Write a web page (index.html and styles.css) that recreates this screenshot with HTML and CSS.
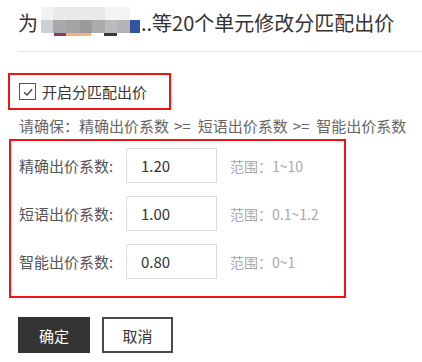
FILE: index.html
```html
<!DOCTYPE html>
<html lang="zh-CN">
<head>
<meta charset="utf-8">
<link rel="stylesheet" href="styles.css">
</head>
<body>
<div class="dialog">
  <div class="header">
    <span class="title-pre">为</span>
    <span class="blur">
      <span class="blur-top">
        <i class="c1"></i><i class="c2"></i><i class="c3"></i>
      </span>
      <span class="blur-mid">
        <i class="m1"></i><i class="m2"></i><i class="m3"></i><i class="m4"></i><i class="m5"></i><i class="m6"></i><i class="m7"></i><i class="m8"></i>
      </span>
      <span class="blur-bot">
        <i class="b0"></i><i class="b1"></i><i class="b2"></i><i class="b3"></i><i class="b4"></i>
      </span>
    </span>
    <span class="title-post">..等20个单元修改分匹配出价</span>
  </div>
  <div class="content">
    <div class="mark check-box">
      <span class="checkbox">
        <svg width="14" height="14" viewBox="0 0 14 14"><path d="M3 7.2 L6 10 L11.2 4.2" fill="none" stroke="#444" stroke-width="1.4"/></svg>
      </span>
      <span class="check-label">开启分匹配出价</span>
    </div>
    <div class="hint">请确保：精确出价系数<span class="op">&gt;=</span>短语出价系数<span class="op">&gt;=</span>智能出价系数</div>
    <div class="mark form-box">
      <div class="row">
        <span class="label">精确出价系数:</span>
        <span class="input">1.20</span>
        <span class="range">范围：1~10</span>
      </div>
      <div class="row">
        <span class="label">短语出价系数:</span>
        <span class="input">1.00</span>
        <span class="range">范围：0.1~1.2</span>
      </div>
      <div class="row">
        <span class="label">智能出价系数:</span>
        <span class="input">0.80</span>
        <span class="range">范围：0~1</span>
      </div>
    </div>
    <div class="actions">
      <button class="btn btn-primary">确定</button>
      <button class="btn btn-default">取消</button>
    </div>
  </div>
</div>
</body>
</html>
```

FILE: styles.css
```css
html, body {
  margin: 0;
  padding: 0;
  background: #fff;
}
body {
  font-family: "Noto Sans CJK SC", "Noto Sans", sans-serif;
  color: #333;
  width: 422px;
  height: 362px;
  overflow: hidden;
}
.header {
  margin-left: 18px;
  padding-top: 9px;
  padding-bottom: 14px;
  border-bottom: 1px solid #e6e6e6;
  display: flex;
  align-items: center;
  height: 28px;
  font-size: 20px;
  line-height: 28px;
  color: #333;
}
.title-pre { width: 23px; }
.blur {
  position: relative;
  width: 100px;
  height: 29px;
  display: flex;
  flex-direction: column;
  margin-top: -3px;
}
.blur i { display: block; height: 100%; }
.blur-top { display: flex; height: 13px; width: 89px; }
.blur-top .c1 { width: 12px; background: #f2f2f2; }
.blur-top .c2 { width: 52px; background: #e9e9ea; }
.blur-top .c3 { width: 25px; background: #f4f4f4; }
.blur-mid { display: flex; height: 13px; }
.blur-mid .m1 { width: 12px; background: #cfcfcf; }
.blur-mid .m2 { width: 13px; background: #a8a8b0; }
.blur-mid .m3 { width: 14px; background: #a3a3a3; }
.blur-mid .m4 { width: 12px; background: #9b9b9b; }
.blur-mid .m5 { width: 13px; background: #ababab; }
.blur-mid .m6 { width: 12px; background: #bbbbbb; }
.blur-mid .m7 { width: 13px; background: #b3b3b8; }
.blur-mid .m8 { width: 10px; background: #2f55a0; }
.blur-bot { display: flex; height: 3px; }
.blur-bot .b0 { width: 13px; }
.blur-bot .b1 { width: 12px; background: #8a3a60; }
.blur-bot .b2 { width: 25px; background: #f7b27a; }
.blur-bot .b3 { width: 13px; }
.blur-bot .b4 { width: 13px; background: #3a3a3a; }

.content {
  padding-left: 19px;
}
.mark {
  border: 2px solid #f01414;
}
.check-box {
  margin-top: 21px;
  margin-left: -11px;
  width: 150px;
  height: 33px;
  padding-left: 9px;
  display: flex;
  align-items: center;
}
.checkbox {
  box-sizing: border-box;
  width: 17px;
  height: 17px;
  border: 1px solid #555;
  display: flex;
  align-items: center;
  justify-content: center;
  margin-right: 6px;
}
.checkbox svg { display: block; }
.check-label {
  font-size: 15px;
  color: #333;
}
.hint {
  margin-top: 6px;
  font-size: 15px;
  line-height: 20px;
  color: #666;
  white-space: nowrap;
}
.hint .op {
  margin: 0 7px 0 5px;
}
.form-box {
  margin-top: 3px;
  margin-left: -10px;
  width: 325px;
  padding: 7px 0 17px 8px;
  display: flex;
  flex-direction: column;
  gap: 13px;
}
.row {
  display: flex;
  align-items: center;
  height: 35px;
}
.label {
  width: 107px;
  font-size: 15px;
  color: #555;
}
.input {
  box-sizing: border-box;
  width: 91px;
  height: 35px;
  border: 1px solid #dcdcdc;
  padding-left: 14px;
  font-size: 15px;
  line-height: 33px;
  color: #333;
}
.range {
  margin-left: 13px;
  font-size: 14px;
  color: #a8a8a8;
}
.actions {
  margin-top: 19px;
  margin-left: -1px;
  display: flex;
  gap: 12px;
}
.btn {
  box-sizing: border-box;
  height: 36px;
  font-family: inherit;
  font-size: 15px;
  padding: 0;
  margin: 0;
  cursor: pointer;
}
.btn-primary {
  width: 72px;
  background: #333;
  color: #fff;
  border: 1px solid #333;
}
.btn-default {
  width: 71px;
  background: #fff;
  color: #333;
  border: 2px solid #4a4a4a;
}
```
